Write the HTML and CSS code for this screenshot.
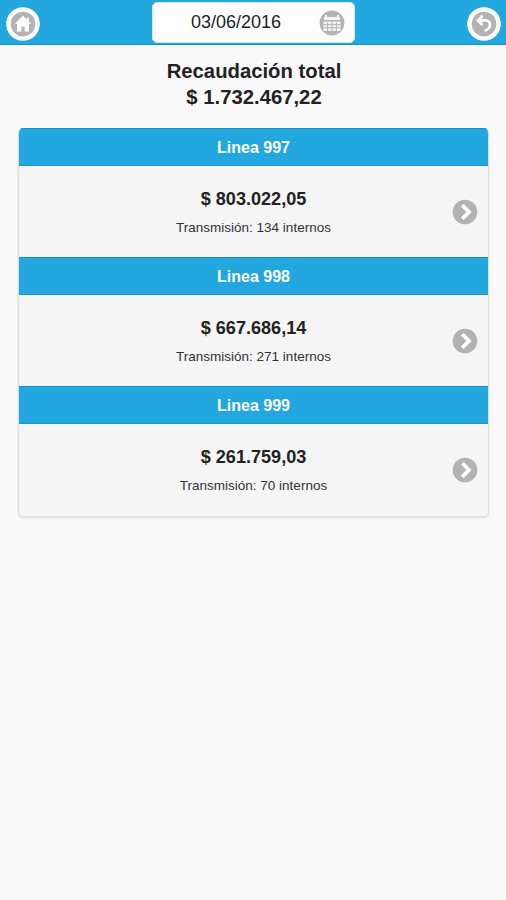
FILE: index.html
```html
<!DOCTYPE html>
<html lang="es">
<head>
<meta charset="utf-8">
<title>Recaudación</title>
<link rel="stylesheet" href="styles.css">
</head>
<body>
<header class="topbar">
  <a class="round"><svg viewBox="0 0 34 34"><circle cx="17" cy="17" r="16.8" fill="#fff"/><circle cx="17" cy="17" r="12.3" fill="#b3b3b3"/><path d="M17 8.5 8.8 16.8H11v7.7h4.4v-5h3.2v5H23v-7.7h2.2l-2.2-2.2V10.5h-2v2z" fill="#fff"/></svg></a>
  <div class="date"><span class="date-text">03/06/2016</span>
    <svg class="calendar" viewBox="0 0 26 26"><circle cx="13" cy="13" r="12.4" fill="#b3b3b3"/><path d="M6 5h2v2h10V5h2v2h1v3H5V7h1zM4.5 11.5h17V21h-17z" fill="#f4f4f4"/><path d="M4.5 14.6h17M4.5 17.8h17M8.7 11.5V21M13 11.5V21M17.3 11.5V21" stroke="#b3b3b3" stroke-width="1"/></svg>
  </div>
  <a class="round"><svg viewBox="0 0 34 34"><circle cx="17" cy="17" r="16.8" fill="#fff"/><circle cx="17" cy="17" r="12.3" fill="#b3b3b3"/><path d="M12 13.4h6c7 0 6.6 8-.4 10.4" fill="none" stroke="#fff" stroke-width="2.7"/><path d="M15.6 8.8 11 13.4l4.6 4.6" fill="none" stroke="#fff" stroke-width="2.7"/></svg></a>
</header>
<main>
  <h1 class="total">Recaudación total<br>$ 1.732.467,22</h1>
  <section class="list">
    <h2 class="line">Linea 997</h2>
    <div class="item"><div class="info"><p class="amount">$ 803.022,05</p><p class="detail">Transmisión: 134 internos</p></div>
      <svg class="arrow" viewBox="0 0 26 26"><circle cx="13" cy="13" r="12.3" fill="#b2b2b2"/><path d="m10.2 6.2 6.8 6.8-6.8 6.8" fill="none" stroke="#fff" stroke-width="3.8"/></svg></div>
    <h2 class="line">Linea 998</h2>
    <div class="item"><div class="info"><p class="amount">$ 667.686,14</p><p class="detail">Transmisión: 271 internos</p></div>
      <svg class="arrow" viewBox="0 0 26 26"><circle cx="13" cy="13" r="12.3" fill="#b2b2b2"/><path d="m10.2 6.2 6.8 6.8-6.8 6.8" fill="none" stroke="#fff" stroke-width="3.8"/></svg></div>
    <h2 class="line">Linea 999</h2>
    <div class="item"><div class="info"><p class="amount">$ 261.759,03</p><p class="detail">Transmisión: 70 internos</p></div>
      <svg class="arrow" viewBox="0 0 26 26"><circle cx="13" cy="13" r="12.3" fill="#b2b2b2"/><path d="m10.2 6.2 6.8 6.8-6.8 6.8" fill="none" stroke="#fff" stroke-width="3.8"/></svg></div>
  </section>
</main>
</body>
</html>
```
FILE: styles.css
```css
* { box-sizing: border-box; }
body {
  margin: 0;
  min-height: 900px;
  background: #f9f9f9;
  color: #222;
  font-family: "Liberation Sans", Arial, sans-serif;
}
h1, h2, p { margin: 0; }
svg { display: block; }
.topbar {
  display: flex;
  justify-content: space-between;
  height: 45px;
  padding: 2px 5px 0 6px;
  background: #22a7df;
  border-bottom: 1px solid #1a94c8;
}
.round { width: 34px; height: 34px; margin-top: 5px; }
.date {
  display: flex;
  align-items: center;
  width: 203px;
  height: 41px;
  padding: 0 9px 0 0;
  background: #fff;
  border: 1px solid #d8e7ee;
  border-radius: 5px;
}
.date-text {
  flex: 1;
  text-align: center;
  font-size: 18px;
  line-height: 37px;
}
.calendar { width: 26px; height: 26px; }
.total {
  padding-top: 13px;
  padding-left: 2px;
  text-align: center;
  font-size: 20.3px;
  line-height: 26px;
}
.list {
  margin: 18px 17px 0 18px;
  background: #f5f5f5;
  border: 1px solid #dedede;
  border-top: 0;
  border-radius: 5px;
  box-shadow: 0 1px 2px #ddd;
  overflow: hidden;
}
.line {
  height: 38px;
  background: #22a7df;
  border-top: 1px solid #1291c6;
  border-bottom: 1px solid #1b99ce;
  color: #fff;
  text-align: center;
  font-size: 16px;
  line-height: 37px;
}
.item {
  display: grid;
  grid-template-columns: 36px 1fr 36px;
  align-items: start;
  height: 91px;
}
.item:last-child { height: 92px; }
.info {
  grid-column: 2;
  padding-top: 19px;
  text-align: center;
}
.amount { font-size: 18.1px; font-weight: bold; line-height: 28px; }
.detail { padding-top: 1px; font-size: 13.5px; line-height: 28px; color: #333; }
.arrow { width: 26px; height: 26px; margin-top: 33px; }
```
